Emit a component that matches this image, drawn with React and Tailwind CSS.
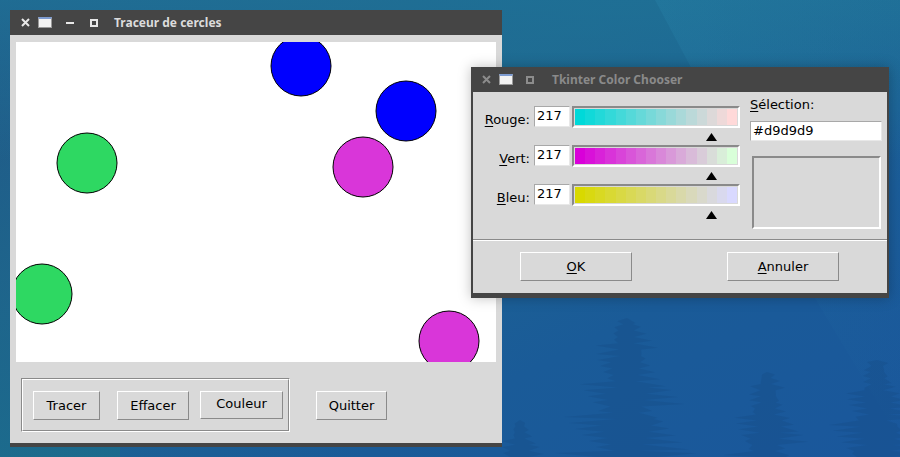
import { Fragment } from 'react';

const circles = [
  { cx: 285, cy: 24, fill: '#0000ff' },
  { cx: 390, cy: 69, fill: '#0000ff' },
  { cx: 71, cy: 121, fill: '#2ed862' },
  { cx: 347, cy: 125, fill: '#d936d9' },
  { cx: 26, cy: 252, fill: '#2ed862' },
  { cx: 433, cy: 299, fill: '#d936d9' },
];

// builds a ragged fir silhouette for the wallpaper
function firPoints(cx, top, bottom, maxHalf, levels, seed) {
  const right = [];
  const left = [];
  const step = (bottom - top) / levels;
  for (let i = 1; i <= levels; i++) {
    const t = i / levels;
    const y = top + step * i;
    const w = maxHalf * Math.pow(t, 0.6);
    const j1 = ((i * 37 + seed) % 9) / 9;
    const j2 = ((i * 53 + seed * 3) % 11) / 11;
    const j3 = ((i * 29 + seed * 7) % 5) / 5;
    right.push([cx + w * (0.45 + 0.7 * j1), y - step * (0.2 + 0.5 * j3)]);
    right.push([cx + w * (0.15 + 0.3 * j2) + 2, y]);
    left.push([cx - w * (0.45 + 0.7 * j2), y - step * (0.3 + 0.4 * j1)]);
    left.push([cx - w * (0.15 + 0.3 * j3) - 2, y]);
  }
  const pts = [[cx, top], ...right, [cx + maxHalf * 0.7, bottom + 20], [cx - maxHalf * 0.7, bottom + 20], ...left.reverse()];
  return pts.map((p) => p.map((v) => v.toFixed(1)).join(',')).join(' ');
}

function Wallpaper() {
  return (
    <svg className="absolute inset-0" width="900" height="457" viewBox="0 0 900 457">
      <defs>
        <linearGradient id="wp" x1="0" y1="0" x2="1" y2="1">
          <stop offset="0" stopColor="#215887" />
          <stop offset="0.35" stopColor="#1e6790" />
          <stop offset="0.7" stopColor="#1a5b98" />
          <stop offset="1" stopColor="#1a579c" />
        </linearGradient>
        <linearGradient id="wl" x1="0" y1="0" x2="0" y2="1">
          <stop offset="0" stopColor="#215683" stopOpacity="0" />
          <stop offset="1" stopColor="#1c6c8c" stopOpacity="0.9" />
        </linearGradient>
        <linearGradient id="top" x1="0" y1="0" x2="0" y2="1">
          <stop offset="0" stopColor="#1f7196" stopOpacity="0.8" />
          <stop offset="1" stopColor="#1f7196" stopOpacity="0" />
        </linearGradient>
        <linearGradient id="streak" x1="0" y1="0" x2="1" y2="1">
          <stop offset="0" stopColor="#2a8ab0" stopOpacity="0.25" />
          <stop offset="0.6" stopColor="#2a80b0" stopOpacity="0.08" />
          <stop offset="1" stopColor="#2a80b0" stopOpacity="0" />
        </linearGradient>
      </defs>
      <rect width="900" height="457" fill="url(#wp)" />
      <rect width="120" height="457" fill="url(#wl)" />
      <rect x="0" y="0" width="900" height="160" fill="url(#top)" />
      <polygon points="655,0 900,0 900,440 870,390 810,290" fill="url(#streak)" />
      <g fill="#164c86" opacity="0.35">
        <polygon points={firPoints(627, 318, 457, 70, 22, 3)} />
        <polygon points={firPoints(767, 372, 457, 42, 14, 5)} />
        <polygon points={firPoints(877, 360, 457, 55, 16, 7)} />
        <polygon points={firPoints(520, 420, 457, 22, 6, 2)} />
      </g>
    </svg>
  );
}

function WinIcon() {
  return (
    <span className="block w-[14px] h-[11px] bg-[#f2f2f2] border border-[#9a9a9a] border-t-[2px] border-t-[#7d9bd0]" />
  );
}

function TitleBar({ title, active, minimize }) {
  const color = active ? '#e8e8e8' : '#8c8c8c';
  return (
    <div className="h-[25px] bg-[#454545] flex items-center shrink-0">
      <svg className="ml-[11px]" width="9" height="9" viewBox="0 0 9 9">
        <path d="M1 1 L8 8 M8 1 L1 8" stroke={color} strokeWidth="2" />
      </svg>
      <span className="ml-[8px]">
        <WinIcon />
      </span>
      {minimize && (
        <svg className="ml-[14px]" width="8" height="8" viewBox="0 0 8 8">
          <rect x="0" y="3" width="8" height="2" fill={color} />
        </svg>
      )}
      <svg className={minimize ? 'ml-[16px]' : 'ml-[13px]'} width="8" height="8" viewBox="0 0 8 8">
        <rect x="1" y="1" width="6" height="6" fill="none" stroke={color} strokeWidth="2" />
      </svg>
      <span
        className={`${minimize ? 'ml-[16px]' : 'ml-[18px]'} font-['Noto_Sans',sans-serif] font-bold text-[12px] leading-none ${
          active ? 'text-[#dcdcdc]' : 'text-[#8a8a8a]'
        }`}
      >
        {title}
      </span>
    </div>
  );
}

function TkButton({ children, w, h = 'h-[29px]' }) {
  return (
    <div
      className={`${w} ${h} flex items-center justify-center border border-t-white border-l-white border-b-[#8a8a8a] border-r-[#8a8a8a] text-[13px] text-black`}
    >
      {children}
    </div>
  );
}

function Main() {
  return (
    <div className="absolute left-[10px] top-[10px] w-[492px] h-[437px] flex flex-col bg-[#d9d9d9] border-b-[4px] border-b-[#454545] font-['DejaVu_Sans',sans-serif]">
      <TitleBar title="Traceur de cercles" active minimize />
      <div className="ml-[6px] mt-[7px] w-[480px] h-[320px] bg-white">
        <svg width="480" height="320" viewBox="0 0 480 320">
          {circles.map((c, i) => (
            <circle key={i} cx={c.cx} cy={c.cy} r="30" fill={c.fill} stroke="#000" strokeWidth="1" />
          ))}
        </svg>
      </div>
      <div className="flex items-start mt-[16px] ml-[11px]">
        <div className="w-[269px] h-[54px] border border-t-[#8a8a8a] border-l-[#8a8a8a] border-b-white border-r-white">
          <div className="h-full border border-t-white border-l-white border-b-[#8a8a8a] border-r-[#8a8a8a] flex items-start pl-[10px] pt-[11px]">
            <TkButton w="w-[67px]">Tracer</TkButton>
            <div className="ml-[17px]">
              <TkButton w="w-[72px]">Effacer</TkButton>
            </div>
            <div className="ml-[11px]">
              <TkButton w="w-[83px]" h="h-[28px]">
                <span className="-mt-[2px]">Couleur</span>
              </TkButton>
            </div>
          </div>
        </div>
        <div className="ml-[26px] mt-[13px]">
          <TkButton w="w-[71px]">Quitter</TkButton>
        </div>
      </div>
    </div>
  );
}

const sliders = [
  { label: 'Rouge', mk: (v) => [v, 217, 217] },
  { label: 'Vert', mk: (v) => [217, v, 217] },
  { label: 'Bleu', mk: (v) => [217, 217, v] },
];

function Ul({ text }) {
  return (
    <>
      <span className="underline underline-offset-[2px]">{text[0]}</span>
      {text.slice(1)}
    </>
  );
}

function Slider({ mk }) {
  const steps = Array.from({ length: 16 }, (_, i) => Math.round((i / 15) * 255));
  return (
    <div className="flex flex-col">
      <div className="w-[168px] h-[22px] border-2 border-t-[#8a8a8a] border-l-[#8a8a8a] border-b-white border-r-white flex p-[1px]">
        {steps.map((v, i) => {
          const [r, g, b] = mk(v);
          return <div key={i} className="flex-1 h-full" style={{ background: `rgb(${r},${g},${b})` }} />;
        })}
      </div>
      <div className="h-[17px] relative">
        <svg className="absolute left-[134px] top-[5px]" width="11" height="8" viewBox="0 0 11 8">
          <polygon points="5.5,0 11,8 0,8" fill="#000" />
        </svg>
      </div>
    </div>
  );
}

function Chooser() {
  return (
    <div className="absolute left-[471px] top-[67px] w-[418px] h-[231px] flex flex-col bg-[#d9d9d9] border-x-2 border-x-[#454545] border-b-[5px] border-b-[#454545] font-['DejaVu_Sans',sans-serif] text-[13px] text-black shadow-[0_0_12px_rgba(0,0,0,0.25)]">
      <div className="-mx-[2px]">
        <TitleBar title="Tkinter Color Chooser" />
      </div>
      <div className="h-[147px] flex shrink-0">
        <div className="w-[267px] pl-[11px] pt-[14px] flex flex-col">
          {sliders.map((s) => (
            <div key={s.label} className="flex items-start">
              <div className="w-[46px] text-right leading-[16px] mt-[6px]">
                <Ul text={s.label} />:
              </div>
              <div className="ml-[4px] w-[36px] h-[21px] bg-white border border-t-[#a8a8a8] border-l-[#a8a8a8] border-b-[#e8e8e8] border-r-[#e8e8e8] pl-[2px] leading-[16px] pt-[1px]">
                217
              </div>
              <div className="ml-[2px]">
                <Slider mk={s.mk} />
              </div>
            </div>
          ))}
        </div>
        <div className="ml-[10px] pt-[5px] flex flex-col">
          <div className="leading-[16px]">
            <Ul text="Sélection" />:
          </div>
          <div className="mt-[8px] w-[132px] h-[20px] bg-white border border-t-[#a8a8a8] border-l-[#a8a8a8] border-b-[#e8e8e8] border-r-[#e8e8e8] pl-[2px] leading-[16px] pt-[1px]">
            #d9d9d9
          </div>
          <div className="mt-[15px] ml-[2px] w-[129px] h-[73px] bg-[#d9d9d9] border-2 border-t-[#8a8a8a] border-l-[#8a8a8a] border-b-white border-r-white" />
        </div>
      </div>
      <div className="h-[1px] bg-[#8a8a8a]" />
      <div className="h-[1px] bg-white" />
      <div className="flex pt-[11px]">
        <div className="ml-[47px]">
          <TkButton w="w-[112px]">
            <Ul text="OK" />
          </TkButton>
        </div>
        <div className="ml-[95px]">
          <TkButton w="w-[112px]">
            <Ul text="Annuler" />
          </TkButton>
        </div>
      </div>
    </div>
  );
}

export default function App() {
  return (
    <div className="relative w-[900px] h-[457px] overflow-hidden">
      <Wallpaper />
      <Main />
      <Chooser />
    </div>
  );
}
